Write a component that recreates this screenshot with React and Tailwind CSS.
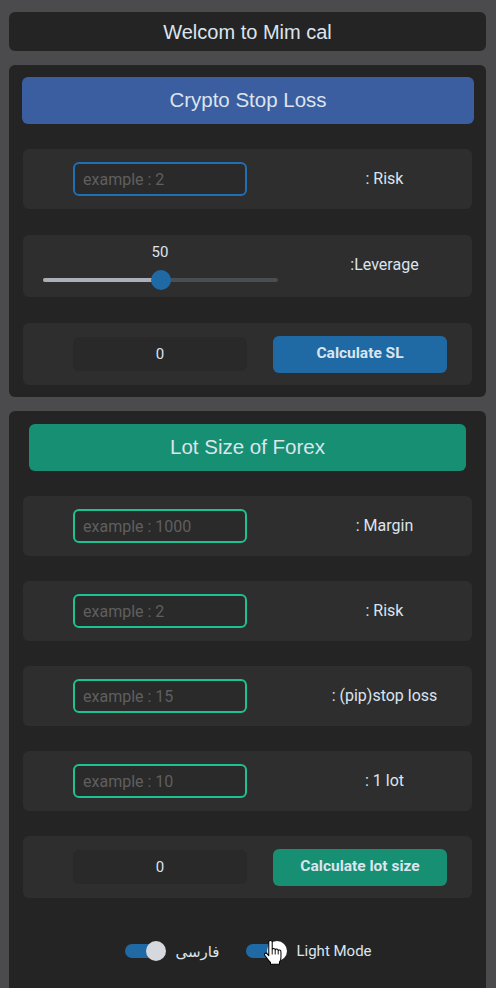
import { useState } from "react";

const txt = "text-[#dce4ee]";
const arial = { fontFamily: "'Liberation Sans', Arial, sans-serif" };

function Row({ children, className = "" }) {
  return (
    <div className={`mx-[14px] flex items-center rounded-[6px] bg-[#2e2e2e] ${className}`}>
      {children}
    </div>
  );
}

function InputRow({ placeholder, label, tone }) {
  const border = tone === "green" ? "border-[#1ec290]" : "border-[#1f6fb5]";
  return (
    <Row className="h-[60px]">
      <div className="flex w-[274px] justify-center">
        <input
          placeholder={placeholder}
          className={`h-[34px] w-[174px] rounded-[6px] border-2 ${border} bg-[#2a2a2a] px-[8px] text-[16px] text-[#dce4ee] outline-none placeholder:text-[#5f5f5f]`}
        />
      </div>
      <div className={`flex-1 text-center text-[16px] ${txt}`}>{label}</div>
    </Row>
  );
}

function ResultRow({ button, color }) {
  return (
    <Row className="h-[62px] gap-[26px] pl-[50px]">
      <div className={`flex h-[34px] w-[174px] items-center justify-center rounded-[6px] bg-[#292929] text-[15px] ${txt}`}>
        0
      </div>
      <button className={`h-[37px] w-[174px] rounded-[6px] ${color} text-[15.5px] font-bold ${txt}`}>
        {button}
      </button>
    </Row>
  );
}

function Toggle({ thumb = "bg-[#d5d9de]", children }) {
  return (
    <div className="relative flex items-center">
      <div className="relative h-[14px] w-[40px] rounded-full bg-[#1f6aa5]">
        <div className={`absolute right-[-1px] top-[-3px] h-[20px] w-[20px] rounded-full ${thumb}`} />
      </div>
      {children}
    </div>
  );
}

export default function App() {
  const [lev] = useState(50);
  return (
    <div
      className="min-h-[988px] w-[496px] bg-[#4b4b4d] px-[9px] pt-[12px]"
      style={{ fontFamily: "Roboto, 'Liberation Sans', sans-serif" }}
    >
      <div
        className={`flex h-[39px] w-[477px] items-center justify-center rounded-[6px] bg-[#242424] text-[20px] ${txt}`}
        style={arial}
      >
        Welcom to Mim cal
      </div>

      <div className="mt-[14px] w-[477px] rounded-[6px] bg-[#242424] pb-[12px] pt-[12px]">
        <div
          className={`ml-[13px] flex h-[47px] w-[452px] items-center justify-center rounded-[6px] bg-[#3a5e9f] text-[20.5px] ${txt}`}
          style={arial}
        >
          Crypto Stop Loss
        </div>
        <div className="mt-[25px] flex flex-col gap-[26px]">
          <InputRow placeholder="example : 2" label=": Risk" tone="blue" />
          <Row className="h-[62px]">
            <div className="flex h-full w-[274px] flex-col items-center pt-[8px]">
              <div className={`text-[15px] leading-[18px] ${txt}`}>{lev}</div>
              <div className="relative mt-[17px] h-[4px] w-[235px] rounded-full bg-[#4a4d51]">
                <div className="absolute left-0 top-0 h-[4px] w-[117px] rounded-full bg-[#aab0b5]" />
                <div className="absolute left-[108px] top-[-8px] h-[20px] w-[20px] rounded-full bg-[#1f6aa5]" />
              </div>
            </div>
            <div className={`flex-1 pb-[2px] text-center text-[16px] ${txt}`}>:Leverage</div>
          </Row>
          <ResultRow button="Calculate SL" color="bg-[#1f6aa5]" />
        </div>
      </div>

      <div className="mt-[14px] w-[477px] rounded-[6px] bg-[#242424] pb-[30px] pt-[13px]">
        <div
          className={`ml-[20px] flex h-[47px] w-[437px] items-center justify-center rounded-[6px] bg-[#168f73] text-[20.5px] ${txt}`}
          style={arial}
        >
          Lot Size of Forex
        </div>
        <div className="mt-[25px] flex flex-col gap-[25px]">
          <InputRow placeholder="example : 1000" label=": Margin" tone="green" />
          <InputRow placeholder="example : 2" label=": Risk" tone="green" />
          <InputRow placeholder="example : 15" label=": (pip)stop loss" tone="green" />
          <InputRow placeholder="example : 10" label=": 1 lot" tone="green" />
          <ResultRow button="Calculate lot size" color="bg-[#168f73]" />
        </div>
        <div className="mt-[42px] flex items-center justify-center gap-[27px] pl-[2px]">
          <Toggle>
            <span
              className={`ml-[10px] text-[15px] ${txt}`}
              style={{ fontFamily: "'Noto Sans', 'DejaVu Sans', sans-serif" }}
            >
              فارسی
            </span>
          </Toggle>
          <Toggle thumb="bg-[#ffffff]">
            <span className={`ml-[10px] text-[15px] ${txt}`}>Light Mode</span>
            <svg
              className="absolute left-[17px] top-[-1px] z-10"
              width="19"
              height="27"
              viewBox="0 0 16.5 22.5"
            >
              <path
                d="M5 2Q5 .8 6.5 .8Q8 .8 8 2L8 8.5Q8.2 7.8 9.3 7.8Q10.5 7.8 10.6 9Q10.8 8.3 11.9 8.3Q13.1 8.3 13.2 9.5Q13.4 9 14.3 9Q15.6 9 15.6 10.5L15.6 15.5Q15.6 18 14.3 19.5L14.3 21.5L6.5 21.5L6.5 19.8Q5.5 19 4.8 18L1.5 13.8Q.8 12.8 1.7 12.1Q2.7 11.4 3.6 12.4L5 14Z"
                fill="#ffffff"
                stroke="#000000"
                strokeWidth="0.9"
                strokeLinejoin="round"
              />
              <path d="M8 8.5V13M10.6 9V13M13.2 9.5V13" stroke="#000" strokeWidth="0.8" />
            </svg>
          </Toggle>
        </div>
      </div>
    </div>
  );
}
